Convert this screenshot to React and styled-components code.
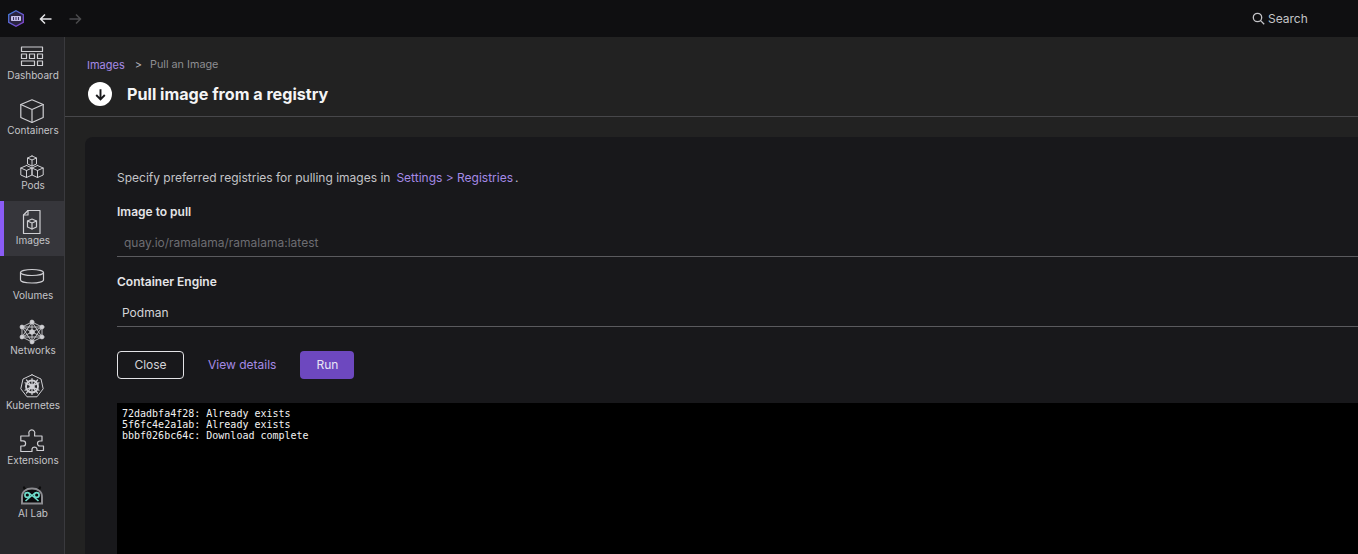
import React from 'react';
import styled, { createGlobalStyle } from 'styled-components';

const Global = createGlobalStyle`
  html, body { margin: 0; padding: 0; height: 100%; overflow: hidden; background: #222222; }
  body { font-family: Inter, "Noto Sans", sans-serif; }
  * { box-sizing: border-box; }
`;

const Shell = styled.div`
  width: 1358px; height: 554px; display: flex; flex-direction: column; overflow: hidden;
`;
const TitleBar = styled.header`
  height: 38px; flex: none; background: #0f0f11; border-bottom: 1px solid #2e2e30;
  display: flex; align-items: center; padding-left: 8px; margin-bottom: -1px;
`;
const Logo = styled.svg`width: 16px; height: 17px; flex: none;`;
const NavArrow = styled.svg`width: 16px; height: 16px; margin-left: ${p => p.$gap}px; color: ${p => p.$dim ? '#4a4a4d' : '#e4e4e7'};`;
const SearchBox = styled.div`
  margin-left: auto; width: 106px; display: flex; align-items: center; gap: 3px;
  color: #c4c4c8; font-size: 12px;
`;
const Body = styled.div`flex: 1; display: flex; min-height: 0;`;
const Rail = styled.nav`
  width: 65px; flex: none; background: #27272a; border-right: 1px solid #3a3a3e;
  display: flex; flex-direction: column;
`;
const RailItem = styled.a`
  height: ${p => p.$h || 55}px; flex: none; display: flex; flex-direction: column; align-items: center;
  justify-content: flex-end; padding-bottom: ${p => p.$pb ?? 9}px; color: #c4c4c8; font-size: 10px; line-height: 13px;
  background: ${p => p.$active ? '#36363b' : 'transparent'};
  border-left: ${p => p.$active ? '4px solid #8b5cf6' : '0'};
  padding-right: ${p => p.$active ? '4px' : '0'};
  svg { width: 24px; height: 24px; margin-bottom: 1px; color: #cfcfd3; overflow: visible; }
`;
const RailLabel = styled.span`padding-left: 2px;`;
const Main = styled.main`flex: 1; min-width: 0; display: flex; flex-direction: column; background: #222222;`;
const PageHead = styled.div`
  height: 80px; flex: none; border-bottom: 1px solid #47474a; padding: 21px 0 0 22px;
`;
const Crumbs = styled.div`
  display: flex; align-items: center; font-size: 11px; line-height: 14px; color: #8e8e92;
`;
const CrumbLink = styled.a`color: #a58ae6;`;
const CrumbSep = styled.span`margin: 0 8px 0 10px; color: #b4b4b8;`;
const CrumbPage = styled.span`font-size: 10.8px;`;
const TitleRow = styled.div`display: flex; align-items: center; gap: 15px; margin-top: 10px;`;
const PullBadge = styled.span`
  width: 24px; height: 24px; margin-left: 1px; border-radius: 50%; background: #fff; color: #18181b;
  display: flex; align-items: center; justify-content: center;
`;
const Title = styled.h1`margin: 0; font-size: 16.15px; line-height: 24px; font-weight: 700; color: #f4f4f5;`;
const Content = styled.div`flex: 1; padding: 20px 0 0 20px; min-height: 0;`;
const Card = styled.section`
  height: 100%; background: #18181b; border-radius: 8px 0 0 0; padding: 32px 0 0 32px;
`;
const Hint = styled.p`
  margin: 0; font-size: 12px; line-height: 17px; color: #c4c4c8; display: flex; height: 17px;
`;
const HintLink = styled.a`color: #a58ae6; margin: 0 2px 0 6px;`;
const FieldLabel = styled.div`
  font-size: 12px; font-weight: 600; line-height: 16px; color: #e4e4e7; margin-top: ${p => p.$mt}px;
`;
const Field = styled.div`
  height: 30px; margin-top: ${p => p.$mt}px; border-bottom: 1px solid #5a5a5e; display: flex; align-items: center;
  padding: 2px 0 0 ${p => p.$pl}px; font-size: 12px; color: ${p => p.$muted ? '#6d6d72' : '#d4d4d8'};
`;
const Actions = styled.div`display: flex; align-items: center; margin-top: 24px;`;
const CloseBtn = styled.button`
  width: 67px; height: 28px; background: transparent; border: 1px solid #e4e4e7; border-radius: 4px;
  color: #d4d4d8; font: 12px Inter, sans-serif; padding: 0 0 2px;
`;
const LinkBtn = styled.a`margin: -2px 0 0 24px; font-size: 12px; color: #a58ae6;`;
const RunBtn = styled.button`
  width: 54px; height: 28px; margin-left: 24px; background: #6d48bf; border: 0; border-radius: 4px;
  color: #e9e5f5; font: 12px Inter, sans-serif; padding: 0 0 2px;
`;
const Terminal = styled.pre`
  margin: 24px 0 0; height: 151px; background: #000; color: #f2f2f2; padding: 5px 5px 0;
  font: 10px/11px "DejaVu Sans Mono", monospace;
`;

const S = { fill: 'none', stroke: 'currentColor', strokeWidth: 1.2, strokeLinejoin: 'round', strokeLinecap: 'round' };

const DashboardIcon = () => (
  <svg viewBox="0 0 24 24" {...S}>
    <rect x="1.500" y="3" width="21" height="4.500" />
    <rect x="1.500" y="10" width="5" height="4.500" /><rect x="9.500" y="10" width="5" height="4.500" /><rect x="17.500" y="10" width="5" height="4.500" />
    <rect x="1.500" y="17" width="13" height="4.500" /><rect x="17.500" y="17" width="5" height="4.500" />
  </svg>
);
const CubeIcon = () => (
  <svg viewBox="0 0 24 24" {...S}>
    <path d="M12 .8.8 5.500v13L12 23.500l11.200-5v-13L12 .8Z" /><path d="M.8 5.500 12 10.500l11.200-5M12 10.500v13" />
  </svg>
);
const PodsIcon = () => (
  <svg viewBox="0 -1 24 24" {...S} strokeWidth="1">
    <path d="M12 1 7.500 3v6l4.500 2 4.500-2V3L12 1ZM7.500 3 12 5l4.500-2M12 5v6" />
    <path d="M6.500 10.500.8 13v7l5.700 2.500L12 20v-7l-5.500-2.500ZM.8 13l5.700 2.500L12 13M6.500 15.500v7" />
    <path d="M17.500 10.500 12 13v7l5.500 2.500 5.700-2.500v-7l-5.700-2.500ZM12 13l5.500 2.500L23.200 13M17.500 15.500v7" />
  </svg>
);
const ImagesIcon = () => (
  <svg viewBox="0 -1 24 24" {...S}>
    <path d="M8 .5h12v23H3.500V5L8 .5Z" /><path d="M8 .5V5H3.500" />
    <path d="M12 9 7.500 11v6l4.500 2 4.500-2v-6L12 9Z" /><path d="M7.500 11l4.500 2 4.500-2M12 13v6" />
  </svg>
);
const VolumesIcon = () => (
  <svg viewBox="0 0 24 24" {...S}>
    <ellipse cx="12" cy="8.500" rx="11.500" ry="3" />
    <path d="M.5 8.500v7.500c0 1.700 5.100 3 11.500 3s11.500-1.300 11.500-3V8.500" />
  </svg>
);
const NetworksIcon = () => {
  const pts = [[12, 2], [22, 7], [22, 17], [12, 22], [2, 17], [2, 7]];
  return (
    <svg viewBox="0 -1 24 24" {...S} strokeWidth="0.900">
      {pts.map(([x, y], i) => {
        const [a, b] = pts[(i + 1) % 6];
        const [c, d] = pts[(i + 2) % 6];
        return <g key={i}><path d={`M${x} ${y}L${a} ${b}M${x} ${y}L${c} ${d}M${x} ${y}L12 12`} /><circle cx={x} cy={y} r="1.900" fill="currentColor" /></g>;
      })}
      <circle cx="12" cy="12" r="2.300" fill="currentColor" />
    </svg>
  );
};
const KubeIcon = () => (
  <svg viewBox="0 0 24 24" {...S} strokeWidth="1">
    <path d="M12 .8 3 5 .8 14.800 7 22.800h10l6.200-8L21 5 12 .8Z" />
    <circle cx="12" cy="12.500" r="6" strokeWidth="1.900" />
    <path d="M12 4.500v16M5 8.800l14 7.400M19 8.800 5 16.200M6.500 19 17.500 6M17.500 19 6.500 6" strokeWidth="1.200" />
    <circle cx="12" cy="12.500" r="2" fill="currentColor" />
  </svg>
);
const PuzzleIcon = () => (
  <svg viewBox="0 0 24 24" {...S}>
    <path d="M9 5a3 3 0 1 1 5.600 0V7H22v5h-2a2.500 2.500 0 0 0 0 5h3.500v4.500H17V20a2.600 2.600 0 0 0-5 0v2.500H.8V17H3a2.600 2.600 0 0 0 0-5.200H.8V7H9V5Z" />
  </svg>
);
const LabIcon = () => (
  <svg viewBox="0 0 24 24">
    <path d="M5 7.500 4 5.500M19 7.500l1-2" stroke="#0c0c0c" strokeWidth="2.200" strokeLinecap="round" />
    <path d="M2 21.500V15C2 9.500 6 6.500 12 6.500S22 9.500 22 15v6.500Z" fill="#0a0a0c" stroke="#8c8c90" strokeWidth="2" />
    <g fill="none" stroke="#6fdccb" strokeWidth="1.600">
      <circle cx="7.300" cy="13" r="2.400" /><circle cx="16.700" cy="13" r="2.400" />
      <path d="M9.500 11.500l5 4M9.500 15.500l5-4M5.500 19l4-3.500M18.500 19l-4-3.500" />
    </g>
  </svg>
);

const items = [
  ['Dashboard', DashboardIcon, { $h: 54 }],
  ['Containers', CubeIcon],
  ['Pods', PodsIcon],
  ['Images', ImagesIcon, { $active: true }],
  ['Volumes', VolumesIcon],
  ['Networks', NetworksIcon],
  ['Kubernetes', KubeIcon],
  ['Extensions', PuzzleIcon],
  ['AI Lab', LabIcon, { $h: 53, $pb: 9 }],
];

export default function App() {
  return (
    <Shell>
      <Global />
      <TitleBar>
        <Logo viewBox="0 0 16 17">
          <defs>
            <linearGradient id="lg" x1="0" y1="0" x2="1" y2="1">
              <stop offset="0" stopColor="#3f7fd8" />
              <stop offset="1" stopColor="#8a3fd0" />
            </linearGradient>
          </defs>
          <path d="M8 .8 15.300 4.700v7.600L8 16.200.7 12.300V4.700L8 .8Z" fill="#2a2440" stroke="url(#lg)" strokeWidth="1.300" />
          <rect x="3" y="6" width="10" height="5" rx=".8" fill="#c5bfe8" />
          <path d="M5.500 7v3M8 7v3M10.500 7v3" stroke="#3a3260" strokeWidth="1" />
        </Logo>
        <NavArrow viewBox="0 0 16 16" $gap={14} fill="none" stroke="currentColor" strokeWidth="1.500">
          <path d="M13.500 8h-11M7 3.500 2.500 8 7 12.500" />
        </NavArrow>
        <NavArrow viewBox="0 0 16 16" $gap={13} $dim fill="none" stroke="currentColor" strokeWidth="1.500">
          <path d="M2.500 8h11M9 3.500 13.500 8 9 12.500" />
        </NavArrow>
        <SearchBox>
          <svg width="13" height="13" viewBox="0 0 13 13" fill="none" stroke="currentColor" strokeWidth="1.300">
            <circle cx="5.500" cy="5.500" r="4.200" /><path d="m8.600 8.600 3.600 3.600" />
          </svg>
          Search
        </SearchBox>
      </TitleBar>
      <Body>
        <Rail>
          {items.map(([label, Icon, props]) => (
            <RailItem key={label} {...props}><Icon /><RailLabel>{label}</RailLabel></RailItem>
          ))}
        </Rail>
        <Main>
          <PageHead>
            <Crumbs><CrumbLink>Images</CrumbLink><CrumbSep>&gt;</CrumbSep><CrumbPage>Pull an Image</CrumbPage></Crumbs>
            <TitleRow>
              <PullBadge>
                <svg width="15" height="15" viewBox="0 0 14 14" fill="none" stroke="currentColor" strokeWidth="1.800">
                  <path d="M7 2v9.500M3 7.500l4 4 4-4" />
                </svg>
              </PullBadge>
              <Title>Pull image from a registry</Title>
            </TitleRow>
          </PageHead>
          <Content>
            <Card>
              <Hint>Specify preferred registries for pulling images in<HintLink>Settings &gt; Registries</HintLink>.</Hint>
              <FieldLabel $mt={18}>Image to pull</FieldLabel>
              <Field $mt={7} $pl={7} $muted>quay.io/ramalama/ramalama:latest</Field>
              <FieldLabel $mt={17}>Container Engine</FieldLabel>
              <Field $mt={7} $pl={5}>Podman</Field>
              <Actions>
                <CloseBtn>Close</CloseBtn>
                <LinkBtn>View details</LinkBtn>
                <RunBtn>Run</RunBtn>
              </Actions>
              <Terminal>{`72dadbfa4f28: Already exists
5f6fc4e2a1ab: Already exists
bbbf026bc64c: Download complete`}</Terminal>
            </Card>
          </Content>
        </Main>
      </Body>
    </Shell>
  );
}
